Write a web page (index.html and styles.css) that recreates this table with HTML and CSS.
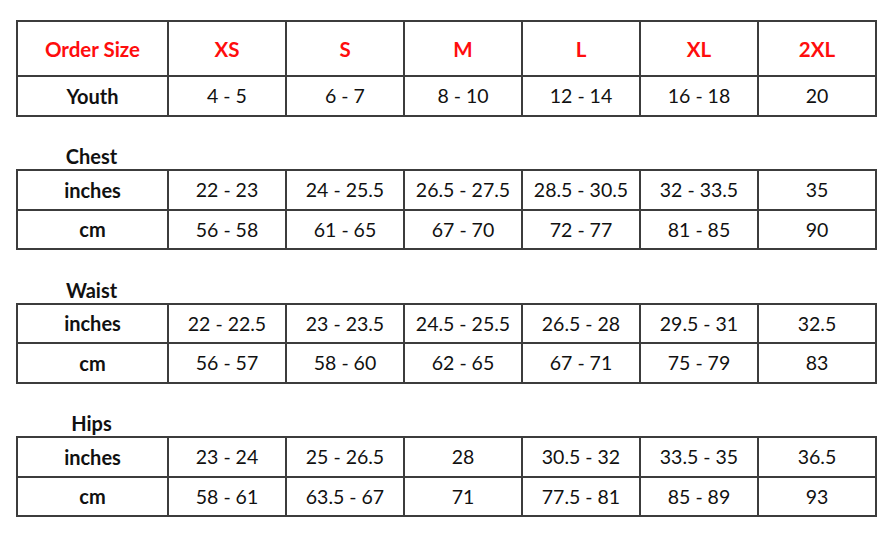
FILE: index.html
```html
<!DOCTYPE html>
<html>
<head>
<meta charset="utf-8">
<link rel="stylesheet" href="styles.css">
</head>
<body>
<div class="page">
  <table class="chart">
    <colgroup><col class="c-first"><col class="c"><col class="c"><col class="c"><col class="c"><col class="c"><col class="c"></colgroup>
    <tr class="head">
      <th>Order Size</th><th>XS</th><th>S</th><th>M</th><th>L</th><th>XL</th><th>2XL</th>
    </tr>
    <tr>
      <th class="rowlabel">Youth</th><td>4 - 5</td><td>6 - 7</td><td>8 - 10</td><td>12 - 14</td><td>16 - 18</td><td>20</td>
    </tr>
  </table>

  <div class="section">
    <div class="label">Chest</div>
    <table class="chart">
      <colgroup><col class="c-first"><col class="c"><col class="c"><col class="c"><col class="c"><col class="c"><col class="c"></colgroup>
      <tr><th class="rowlabel">inches</th><td>22 - 23</td><td>24 - 25.5</td><td>26.5 - 27.5</td><td>28.5 - 30.5</td><td>32 - 33.5</td><td>35</td></tr>
      <tr><th class="rowlabel">cm</th><td>56 - 58</td><td>61 - 65</td><td>67 - 70</td><td>72 - 77</td><td>81 - 85</td><td>90</td></tr>
    </table>
  </div>

  <div class="section">
    <div class="label">Waist</div>
    <table class="chart">
      <colgroup><col class="c-first"><col class="c"><col class="c"><col class="c"><col class="c"><col class="c"><col class="c"></colgroup>
      <tr><th class="rowlabel">inches</th><td>22 - 22.5</td><td>23 - 23.5</td><td>24.5 - 25.5</td><td>26.5 - 28</td><td>29.5 - 31</td><td>32.5</td></tr>
      <tr><th class="rowlabel">cm</th><td>56 - 57</td><td>58 - 60</td><td>62 - 65</td><td>67 - 71</td><td>75 - 79</td><td>83</td></tr>
    </table>
  </div>

  <div class="section">
    <div class="label">Hips</div>
    <table class="chart">
      <colgroup><col class="c-first"><col class="c"><col class="c"><col class="c"><col class="c"><col class="c"><col class="c"></colgroup>
      <tr><th class="rowlabel">inches</th><td>23 - 24</td><td>25 - 26.5</td><td>28</td><td>30.5 - 32</td><td>33.5 - 35</td><td>36.5</td></tr>
      <tr><th class="rowlabel">cm</th><td>58 - 61</td><td>63.5 - 67</td><td>71</td><td>77.5 - 81</td><td>85 - 89</td><td>93</td></tr>
    </table>
  </div>
</div>
</body>
</html>
```
FILE: styles.css
```css
html, body {
  margin: 0;
  padding: 0;
  background: #ffffff;
}
body {
  font-family: Lato, "Open Sans", "Liberation Sans", sans-serif;
  color: #111111;
  font-size: 19.5px;
}
.page {
  padding: 20px 0 0 16px;
  width: 860px;
}
.chart {
  border-collapse: collapse;
  table-layout: fixed;
  width: 860px;
}
.c-first { width: 151px; }
.c { width: 118px; }
.chart th, .chart td {
  border: 2px solid #3c3c3c;
  text-align: center;
  vertical-align: middle;
  padding: 0;
  height: 37.5px;
  font-weight: 400;
  white-space: nowrap;
}
.chart th.rowlabel {
  font-weight: 700;
  font-size: 20px;
}
.chart tr.head th {
  height: 53px;
  color: #ff0d0d;
  font-weight: 700;
  font-size: 20.5px;
}
.section {
  margin-top: 26.5px;
}
.label {
  width: 151px;
  text-align: center;
  font-weight: 700;
  font-size: 20px;
  height: 26px;
  line-height: 26px;
}
```
